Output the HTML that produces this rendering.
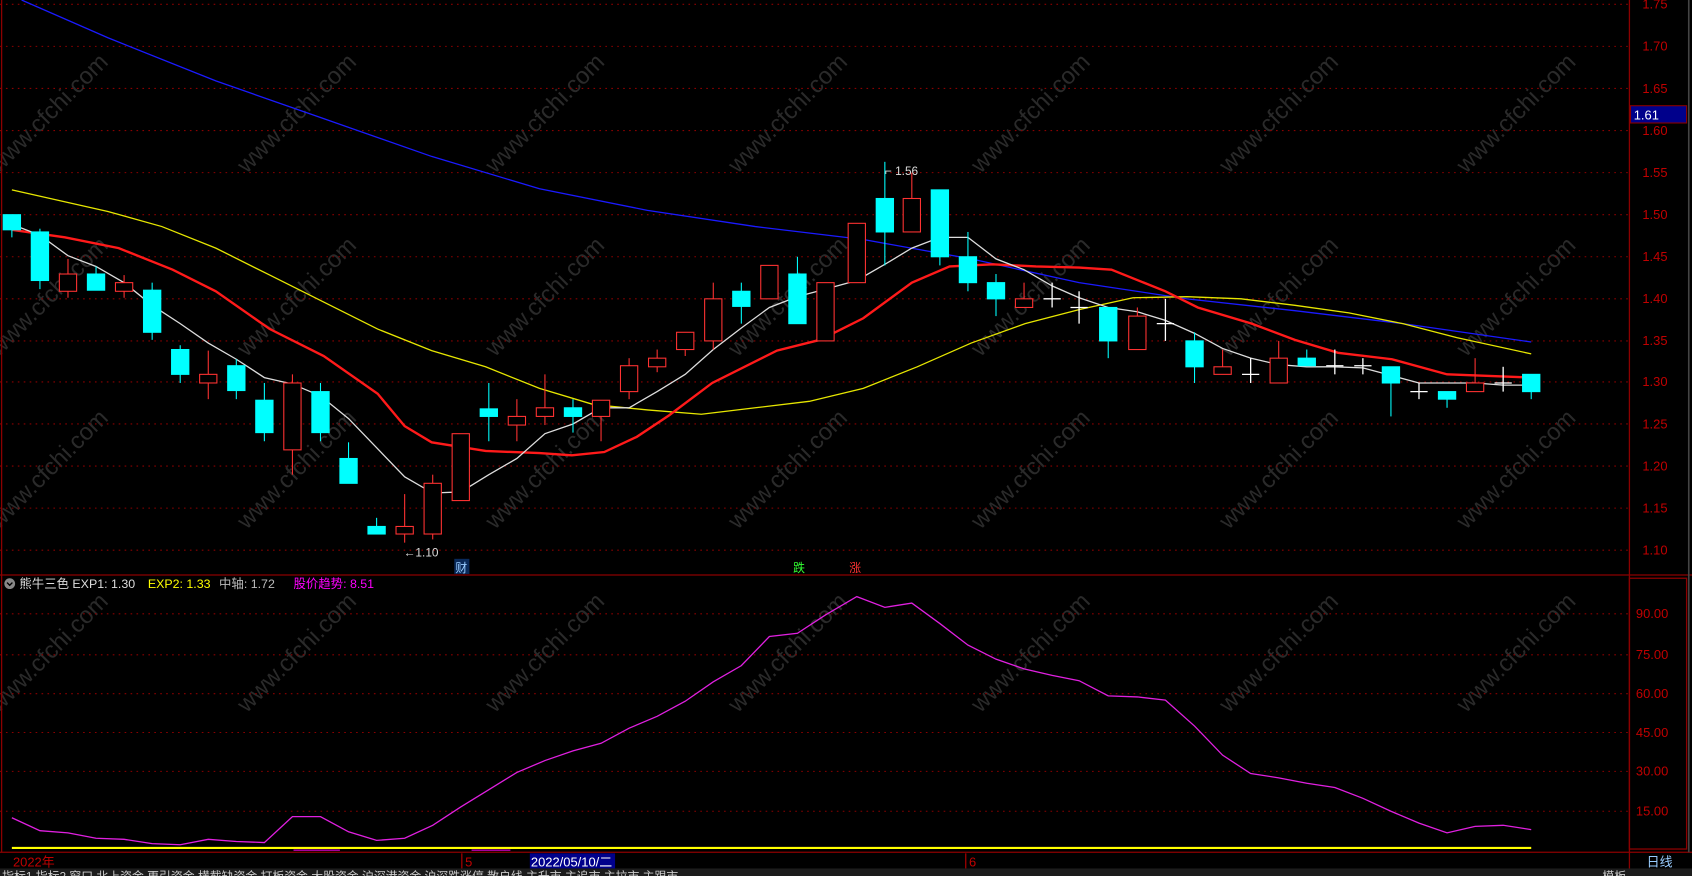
<!DOCTYPE html>
<html><head><meta charset="utf-8"><style>
html,body{margin:0;padding:0;background:#000;overflow:hidden}
svg{display:block}
text{font-family:"Liberation Sans","Noto Sans CJK SC",sans-serif}
</style></head><body>
<svg width="1692" height="876" viewBox="0 0 1568 812" preserveAspectRatio="none" xmlns="http://www.w3.org/2000/svg">
<rect width="1568" height="812" fill="#000"/>
<g fill="#2a2a2a" font-size="22" text-anchor="middle">
<g id="wm">
<text transform="translate(50,110) rotate(-45)">www.cfchi.com</text>
<text transform="translate(280,110) rotate(-45)">www.cfchi.com</text>
<text transform="translate(510,110) rotate(-45)">www.cfchi.com</text>
<text transform="translate(735,110) rotate(-45)">www.cfchi.com</text>
<text transform="translate(960,110) rotate(-45)">www.cfchi.com</text>
<text transform="translate(1190,110) rotate(-45)">www.cfchi.com</text>
<text transform="translate(1410,110) rotate(-45)">www.cfchi.com</text>
</g>
<use href="#wm" y="170"/><use href="#wm" y="330"/><use href="#wm" y="500"/>
</g>
<g stroke="#8b0000" stroke-dasharray="1.5,4" stroke-width="1">
<line x1="0" y1="4" x2="1510" y2="4"/><line x1="0" y1="43" x2="1510" y2="43"/><line x1="0" y1="82" x2="1510" y2="82"/><line x1="0" y1="121" x2="1510" y2="121"/><line x1="0" y1="160" x2="1510" y2="160"/><line x1="0" y1="199" x2="1510" y2="199"/><line x1="0" y1="238" x2="1510" y2="238"/><line x1="0" y1="277" x2="1510" y2="277"/><line x1="0" y1="316" x2="1510" y2="316"/><line x1="0" y1="354" x2="1510" y2="354"/><line x1="0" y1="393" x2="1510" y2="393"/><line x1="0" y1="432" x2="1510" y2="432"/><line x1="0" y1="471" x2="1510" y2="471"/><line x1="0" y1="510" x2="1510" y2="510"/>
<line x1="0" y1="569" x2="1510" y2="569"/><line x1="0" y1="607" x2="1510" y2="607"/><line x1="0" y1="643" x2="1510" y2="643"/><line x1="0" y1="679" x2="1510" y2="679"/><line x1="0" y1="715" x2="1510" y2="715"/><line x1="0" y1="752" x2="1510" y2="752"/>
</g>
<g stroke="#8b0000" stroke-width="1.2" fill="none">
<line x1="0" y1="533" x2="1568" y2="533"/>
<line x1="0" y1="790" x2="1568" y2="790"/>
<line x1="1510" y1="0" x2="1510" y2="812"/>
<rect x="1510" y="536" width="53" height="251"/>
<line x1="1.5" y1="0" x2="1.5" y2="790"/>
</g>
<g stroke="#444" stroke-width="1.5"><line x1="1565" y1="0" x2="1565" y2="790"/></g>
<g fill="#c00000" font-size="12">
<text x="1522" y="8">1.75</text><text x="1522" y="47">1.70</text><text x="1522" y="86">1.65</text><text x="1522" y="164">1.55</text><text x="1522" y="203">1.50</text><text x="1522" y="242">1.45</text><text x="1522" y="281">1.40</text><text x="1522" y="320">1.35</text><text x="1522" y="358">1.30</text><text x="1522" y="397">1.25</text><text x="1522" y="436">1.20</text><text x="1522" y="475">1.15</text><text x="1522" y="514">1.10</text><text x="1522" y="125">1.60</text>
<text x="1516" y="573">90.00</text><text x="1516" y="611">75.00</text><text x="1516" y="647">60.00</text><text x="1516" y="683">45.00</text><text x="1516" y="719">30.00</text><text x="1516" y="756">15.00</text>
</g>
<rect x="1511" y="98" width="52" height="16" fill="#00008b" stroke="#8b0000"/>
<text x="1514" y="111" fill="#fff" font-size="12">1.61</text>
<g fill="none" stroke-width="1.2">
<polyline stroke="#1a1aff" points="20,0 100,35 200,75 300,110 400,145 500,175 600,195 700,210 800,222 900,240 1000,262 1100,277 1200,288 1300,300 1419,317"/>
<polyline stroke="#e6e600" points="11,176 100,196 150,210 200,230 250,255 300,280 350,305 400,325 450,340 500,360 550,375 600,380 650,384 700,378 750,372 800,360 850,340 900,318 950,300 1000,287 1050,276 1100,275 1150,277 1200,283 1250,290 1300,300 1350,313 1419,328"/>
<polyline stroke="#ff1a1a" stroke-width="2.2" points="11,213 60,220 110,230 160,250 200,270 250,305 300,330 350,365 375,395 400,410 450,418 500,420 530,422 560,419 590,405 620,385 660,355 720,325 760,315 800,295 845,262 880,247 920,245 960,247 1000,248 1030,250 1080,270 1110,285 1160,300 1200,315 1240,327 1290,333 1341,347 1419,350"/>
<polyline stroke="#ddd" points="11,208 37,218 63,237 89,247 115,262 141,283 167,300 193,318 219,333 245,350 271,356 297,367 323,388 349,415 375,442 401,457 427,456 453,440 479,425 505,402 531,393 557,378 583,378 609,363 635,347 661,324 687,304 713,285 739,275 765,268 794,260 820,245 845,230 871,220 897,220 923,240 949,250 975,265 1000,276 1027,285 1054,289 1080,297 1107,309 1133,323 1159,332 1185,338 1211,340 1237,340 1263,341 1289,348 1315,355 1341,355 1367,355 1393,357 1419,357"/>
</g>
<g id="cy" fill="#00ffff" stroke="#00ffff" stroke-width="1">
<line x1="11" y1="199" x2="11" y2="220"/><rect x="3" y="199" width="16" height="14"/>
<line x1="37" y1="212" x2="37" y2="268"/><rect x="29" y="215" width="16" height="45"/>
<line x1="89" y1="247" x2="89" y2="269"/><rect x="81" y="254" width="16" height="15"/>
<line x1="141" y1="262" x2="141" y2="315"/><rect x="133" y="269" width="16" height="39"/>
<line x1="167" y1="320" x2="167" y2="355"/><rect x="159" y="324" width="16" height="23"/>
<line x1="219" y1="333" x2="219" y2="370"/><rect x="211" y="339" width="16" height="23"/>
<line x1="245" y1="355" x2="245" y2="409"/><rect x="237" y="371" width="16" height="30"/>
<line x1="297" y1="355" x2="297" y2="409"/><rect x="289" y="363" width="16" height="38"/>
<line x1="323" y1="410" x2="323" y2="448"/><rect x="315" y="425" width="16" height="23"/>
<line x1="349" y1="480" x2="349" y2="495"/><rect x="341" y="488" width="16" height="7"/>
<line x1="453" y1="355" x2="453" y2="409"/><rect x="445" y="379" width="16" height="7"/>
<line x1="531" y1="370" x2="531" y2="401"/><rect x="523" y="378" width="16" height="8"/>
<line x1="687" y1="262" x2="687" y2="300"/><rect x="679" y="270" width="16" height="14"/>
<line x1="739" y1="238" x2="739" y2="300"/><rect x="731" y="254" width="16" height="46"/>
<line x1="820" y1="150" x2="820" y2="246"/><rect x="812" y="184" width="16" height="31"/>
<line x1="871" y1="176" x2="871" y2="246"/><rect x="863" y="176" width="16" height="62"/>
<line x1="897" y1="215" x2="897" y2="270"/><rect x="889" y="238" width="16" height="24"/>
<line x1="923" y1="254" x2="923" y2="293"/><rect x="915" y="262" width="16" height="15"/>
<line x1="1027" y1="285" x2="1027" y2="332"/><rect x="1019" y="285" width="16" height="31"/>
<line x1="1107" y1="308" x2="1107" y2="355"/><rect x="1099" y="316" width="16" height="24"/>
<line x1="1211" y1="324" x2="1211" y2="339"/><rect x="1203" y="332" width="16" height="7"/>
<line x1="1289" y1="340" x2="1289" y2="386"/><rect x="1281" y="340" width="16" height="15"/>
<line x1="1341" y1="363" x2="1341" y2="378"/><rect x="1333" y="363" width="16" height="7"/>
<line x1="1419" y1="347" x2="1419" y2="370"/><rect x="1411" y="347" width="16" height="16"/>
</g>
<g fill="#000" stroke="#ff3232" stroke-width="1">
<line x1="63" y1="240" x2="63" y2="276"/><rect x="55" y="254" width="16" height="16"/>
<line x1="115" y1="255" x2="115" y2="276"/><rect x="107" y="262" width="16" height="8"/>
<line x1="193" y1="325" x2="193" y2="370"/><rect x="185" y="347" width="16" height="8"/>
<line x1="271" y1="347" x2="271" y2="440"/><rect x="263" y="355" width="16" height="62"/>
<line x1="375" y1="458" x2="375" y2="503"/><rect x="367" y="488" width="16" height="7"/>
<line x1="401" y1="440" x2="401" y2="500"/><rect x="393" y="448" width="16" height="47"/>
<rect x="419" y="402" width="16" height="62"/>
<line x1="479" y1="370" x2="479" y2="409"/><rect x="471" y="386" width="16" height="8"/>
<line x1="505" y1="347" x2="505" y2="394"/><rect x="497" y="378" width="16" height="8"/>
<line x1="557" y1="371" x2="557" y2="409"/><rect x="549" y="371" width="16" height="15"/>
<line x1="583" y1="332" x2="583" y2="370"/><rect x="575" y="339" width="16" height="24"/>
<line x1="609" y1="324" x2="609" y2="345"/><rect x="601" y="332" width="16" height="8"/>
<line x1="635" y1="308" x2="635" y2="330"/><rect x="627" y="308" width="16" height="16"/>
<line x1="661" y1="262" x2="661" y2="324"/><rect x="653" y="277" width="16" height="39"/>
<rect x="705" y="246" width="16" height="31"/>
<rect x="757" y="262" width="16" height="54"/>
<rect x="786" y="207" width="16" height="55"/>
<line x1="845" y1="160" x2="845" y2="184"/><rect x="837" y="184" width="16" height="31"/>
<line x1="949" y1="262" x2="949" y2="277"/><rect x="941" y="277" width="16" height="8"/>
<line x1="1054" y1="285" x2="1054" y2="293"/><rect x="1046" y="293" width="16" height="31"/>
<line x1="1133" y1="324" x2="1133" y2="340"/><rect x="1125" y="340" width="16" height="7"/>
<line x1="1185" y1="316" x2="1185" y2="332"/><rect x="1177" y="332" width="16" height="23"/>
<line x1="1367" y1="332" x2="1367" y2="355"/><rect x="1359" y="355" width="16" height="8"/>
</g>
<g stroke="#fff" stroke-width="1.2">
<line x1="975" y1="262" x2="975" y2="285"/><line x1="967" y1="277" x2="983" y2="277"/>
<line x1="1000" y1="270" x2="1000" y2="300"/><line x1="992" y1="285" x2="1008" y2="285"/>
<line x1="1080" y1="277" x2="1080" y2="316"/><line x1="1072" y1="300" x2="1088" y2="300"/>
<line x1="1159" y1="332" x2="1159" y2="355"/><line x1="1151" y1="347" x2="1167" y2="347"/>
<line x1="1237" y1="324" x2="1237" y2="347"/><line x1="1229" y1="339" x2="1245" y2="339"/>
<line x1="1263" y1="332" x2="1263" y2="347"/><line x1="1255" y1="339" x2="1271" y2="339"/>
<line x1="1315" y1="355" x2="1315" y2="370"/><line x1="1307" y1="363" x2="1323" y2="363"/>
<line x1="1393" y1="340" x2="1393" y2="363"/><line x1="1385" y1="355" x2="1401" y2="355"/>
</g>
<g font-size="11">
<text x="820" y="162" fill="#ddd">⌐ 1.56</text>
<text x="374" y="516" fill="#ddd">←1.10</text>
<rect x="421" y="518" width="14" height="14" fill="#0a2a5a"/>
<text x="422" y="530" fill="#9cf" font-size="11">财</text>
<text x="735" y="530" fill="#3f3">跌</text>
<text x="787" y="530" fill="#f33">涨</text>
</g>
<circle cx="9" cy="541" r="5" fill="#888"/>
<path d="M6.5 540 L9 542.5 L11.5 540" stroke="#000" fill="none" stroke-width="1.3"/>
<g font-size="11.5">
<text x="18" y="545" fill="#ddd">熊牛三色 EXP1: 1.30</text>
<text x="137" y="545" fill="#ff0">EXP2: 1.33</text>
<text x="203" y="545" fill="#bbb">中轴: 1.72</text>
<text x="272" y="545" fill="#f0f">股价趋势: 8.51</text>
</g>
<polyline fill="none" stroke="#e020e0" stroke-width="1.2" points="11,758 37,770 63,772 89,777 115,778 141,782 167,783 193,778 219,780 245,781 271,757 297,757 323,771 349,779 375,777 401,765 427,748 453,732 479,716 505,705 531,696 557,689 583,675 609,664 635,650 661,632 687,617 713,590 739,587 765,570 794,553 820,563 845,559 871,578 897,598 923,611 949,620 975,626 1000,631 1027,645 1054,646 1080,649 1107,673 1133,700 1159,717 1185,721 1211,726 1237,730 1263,740 1289,752 1315,763 1341,772 1367,766 1393,765 1419,769"/>
<line x1="11" y1="786" x2="1419" y2="786" stroke="#ffff00" stroke-width="2"/>
<line x1="272" y1="788" x2="315" y2="788" stroke="#f0f" stroke-width="1"/>
<line x1="437" y1="788" x2="473" y2="788" stroke="#f0f" stroke-width="1"/>
<rect x="0" y="790" width="1510" height="0" fill="none"/>
<g font-size="12">
<text x="12" y="803" fill="#c00000">2022年</text>
<line x1="428" y1="791" x2="428" y2="805" stroke="#c00000"/><text x="431" y="803" fill="#c00000">5</text>
<rect x="491" y="791" width="79" height="14" fill="#00008b"/>
<text x="492" y="803" fill="#fff">2022/05/10/二</text>
<line x1="895" y1="791" x2="895" y2="805" stroke="#c00000"/><text x="898" y="803" fill="#c00000">6</text>
<text x="1526" y="803" fill="#9cf">日线</text>
</g>
<rect x="0" y="805" width="1568" height="7" fill="#1c1c1c"/>
<g fill="#ccc" font-size="11">
<text x="2" y="816">指标1 指标2 窗口 北上资金 更引资金 横截缺资金 打板资金 大股资金 沪深港资金 沪深跌涨停 散户线 主升市 主追市 主拉市 主跟市</text>
<text x="1485" y="816">模板</text>
</g>
</svg>
</body></html>
